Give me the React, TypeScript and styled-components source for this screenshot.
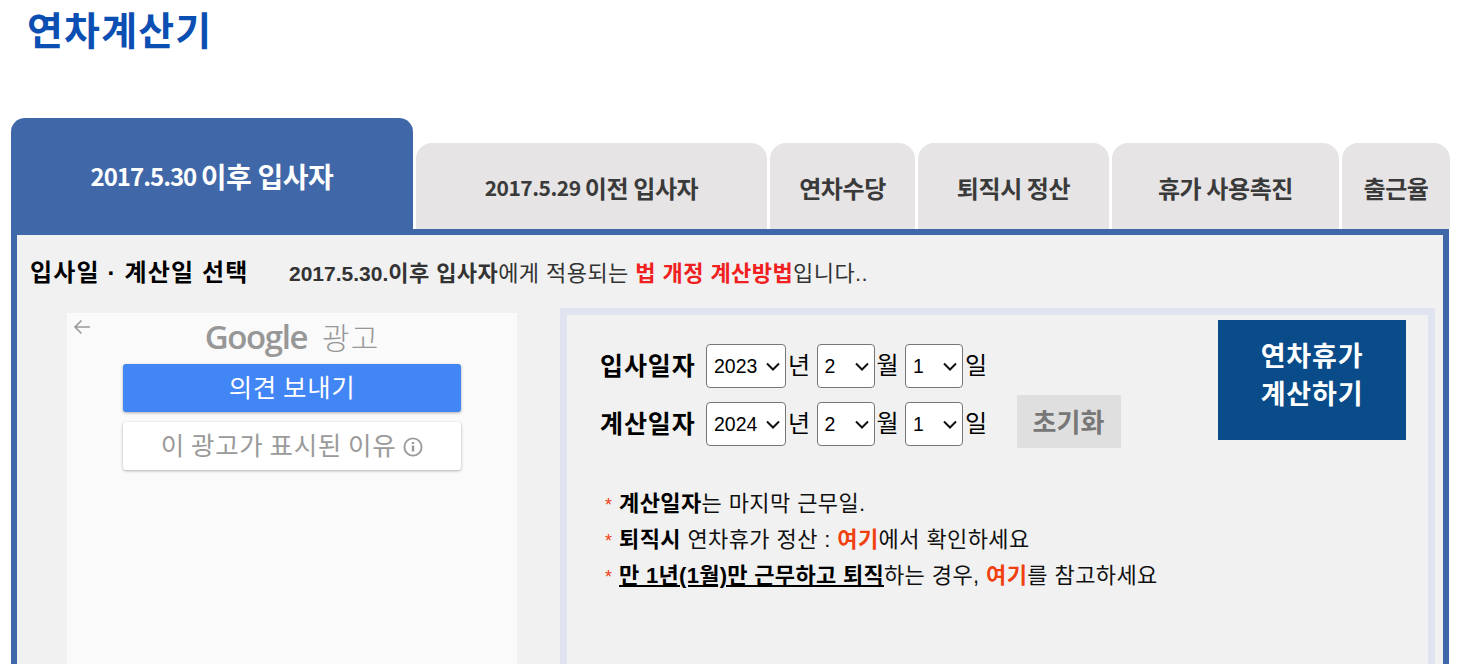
import styled, { createGlobalStyle } from "styled-components";

const GlobalStyle = createGlobalStyle`
  html, body {
    margin: 0;
    padding: 0;
    background: #fff;
    height: 664px;
    overflow: hidden;
  }
  body {
    font-family: "Liberation Sans", "Noto Sans CJK KR", sans-serif;
  }
`;

const Page = styled.div`
  width: 1464px;
  height: 664px;
  overflow: hidden;
  box-sizing: border-box;
  padding-left: 11px;
`;

const Title = styled.h1`
  margin: 0;
  height: 118px;
  padding-left: 16px;
  box-sizing: border-box;
  color: #0b4fb3;
  font-family: "Noto Sans CJK KR", sans-serif;
  font-size: 39px;
  font-weight: 700;
  line-height: 57px;
  letter-spacing: 1.2px;
`;

const TabBar = styled.div`
  display: flex;
  align-items: flex-end;
  gap: 3px;
  height: 111px;
`;

const Tab = styled.div<{ $w: number; $active?: boolean }>`
  width: ${(p) => p.$w}px;
  height: ${(p) => (p.$active ? 111 : 86)}px;
  padding-top: ${(p) => (p.$active ? 4 : 2)}px;
  box-sizing: border-box;
  display: flex;
  align-items: center;
  justify-content: center;
  border-radius: ${(p) => (p.$active ? "14px 14px 0 0" : "16px 16px 0 0")};
  background: ${(p) => (p.$active ? "#4068a8" : "#e6e4e5")};
  color: ${(p) => (p.$active ? "#fff" : "#3a3a3a")};
  font-family: "Noto Sans CJK KR", sans-serif;
  font-size: ${(p) => (p.$active ? 28 : 24)}px;
  font-weight: 700;
  letter-spacing: -0.4px;
  white-space: pre;
`;

const TabDate = styled.span<{ $active?: boolean }>`
  font-size: ${(p) => (p.$active ? 24 : 21)}px;
  letter-spacing: ${(p) => (p.$active ? -1 : -0.5)}px;
`;

const Panel = styled.div`
  width: 1438px;
  height: 435px;
  box-sizing: border-box;
  border: 6px solid #4068a8;
  border-bottom: 0;
  background: #f1f1f1;
`;

const Heading = styled.div`
  display: flex;
  align-items: center;
  height: 73px;
  padding-left: 13px;
  padding-bottom: 2px;
  box-sizing: border-box;
`;

const HeadingTitle = styled.strong`
  width: 259px;
  color: #000;
  font-size: 24px;
  font-weight: 700;
  letter-spacing: 1.15px;
  white-space: nowrap;
`;

const HeadingText = styled.p`
  margin: 0;
  color: #333;
  font-size: 22px;
  letter-spacing: 0.43px;
  white-space: nowrap;
`;

const HeadingDate = styled.b`
  font-size: 21px;
  letter-spacing: 0;
`;

const Red = styled.b`
  color: #f02020;
`;

const Columns = styled.div`
  display: flex;
  align-items: flex-start;
`;

const Ad = styled.div`
  position: relative;
  flex: none;
  width: 450px;
  height: 351px;
  margin: 5px 43px 0 50px;
  background: #fafafa;
  display: flex;
  flex-direction: column;
  align-items: center;
`;

const BackArrow = styled.svg`
  position: absolute;
  left: 6px;
  top: 6px;
`;

const AdLogo = styled.div`
  display: flex;
  align-items: center;
  gap: 15px;
  height: 51px;
  padding-bottom: 5px;
  box-sizing: border-box;
  color: #979797;
  white-space: nowrap;
`;

const GoogleWord = styled.span`
  font-family: "Open Sans", sans-serif;
  font-size: 33px;
  font-weight: 600;
  letter-spacing: -1.4px;
`;

const AdWord = styled.span`
  font-family: "Noto Sans CJK KR", sans-serif;
  font-size: 30px;
  font-weight: 300;
  letter-spacing: 1px;
`;

const AdButton = styled.div<{ $primary?: boolean }>`
  width: 338px;
  height: 48px;
  margin-bottom: 10px;
  padding-bottom: 5px;
  box-sizing: border-box;
  border-radius: 3px;
  display: flex;
  align-items: center;
  justify-content: center;
  gap: 7px;
  background: ${(p) => (p.$primary ? "#4285f4" : "#fff")};
  color: ${(p) => (p.$primary ? "#fff" : "#9a9a9a")};
  box-shadow: 0 1px 3px rgba(0, 0, 0, 0.3);
  font-family: "Noto Sans CJK KR", sans-serif;
  font-size: 25.5px;
  font-weight: 400;
  letter-spacing: 0.6px;
  white-space: nowrap;
  svg {
    margin-top: 7px;
  }
`;

const CalcBox = styled.section`
  flex: none;
  width: 875px;
  height: 356px;
  box-sizing: border-box;
  border: 7px solid #e0e4f0;
  border-bottom: 0;
  padding: 5px 22px 0 33px;
`;

const TopRow = styled.div`
  display: flex;
  justify-content: space-between;
  align-items: flex-start;
`;

const DateForm = styled.div`
  padding-top: 24px;
  display: flex;
  flex-direction: column;
  gap: 14px;
`;

const DateRow = styled.div`
  display: flex;
  align-items: center;
  height: 44px;
  color: #000;
`;

const RowLabel = styled.b`
  width: 106px;
  padding-bottom: 5px;
  font-size: 25px;
  font-weight: 700;
  letter-spacing: 0.9px;
  white-space: nowrap;
`;

const Unit = styled.span`
  width: 30.5px;
  padding-left: 2px;
  padding-bottom: 5px;
  box-sizing: border-box;
  font-size: 24px;
  font-weight: 400;
`;

const DateSelect = styled.select<{ $w: number }>`
  appearance: none;
  width: ${(p) => p.$w}px;
  height: 44px;
  box-sizing: border-box;
  margin: 0;
  padding: 0 0 0 7px;
  background: #fff url("data:image/svg+xml,%3Csvg xmlns='http://www.w3.org/2000/svg' width='14' height='9' viewBox='0 0 14 9' fill='none' stroke='%23111' stroke-width='2'%3E%3Cpath d='M1 1.5l6 6 6-6'/%3E%3C/svg%3E") no-repeat right 5px center;
  color: #000;
  border: 1px solid #767676;
  border-radius: 4px;
  font-family: "Liberation Sans", sans-serif;
  font-size: 19.5px;
`;

const ResetButton = styled.div`
  width: 104px;
  height: 53px;
  margin: -5px 0 0 23px;
  padding-bottom: 3px;
  box-sizing: border-box;
  display: flex;
  align-items: center;
  justify-content: center;
  background: #dfdfdf;
  color: #777;
  font-size: 26px;
  font-weight: 700;
`;

const CalcButton = styled.div`
  flex: none;
  width: 188px;
  height: 120px;
  padding-bottom: 12px;
  box-sizing: border-box;
  display: flex;
  align-items: center;
  justify-content: center;
  text-align: center;
  background: #0a4c8a;
  color: #fff;
  font-family: "Noto Sans CJK KR", sans-serif;
  font-size: 27px;
  font-weight: 700;
  letter-spacing: 0.8px;
  line-height: 38px;
`;

const Notes = styled.ul`
  list-style: none;
  margin: 40px 0 0;
  padding: 0 0 0 5px;
  color: #111;
  font-size: 22px;
  letter-spacing: 0.4px;
  white-space: nowrap;
`;

const NoteItem = styled.li`
  height: 36px;
  line-height: 36px;
  &::before {
    content: "*";
    display: inline-block;
    width: 14px;
    color: #f04010;
    font-size: 18px;
    letter-spacing: 0;
  }
`;

const Strong = styled.b`
  color: #000;
`;

const Under = styled.b`
  color: #000;
  text-decoration: underline;
  letter-spacing: 0.3px;
`;

const Link = styled.b`
  color: #f04010;
`;

const range = (from: number, to: number) =>
  Array.from({ length: to - from + 1 }, (_, i) => from + i);

type DateFieldsProps = {
  label: string,
  year: number,
  children?: React.ReactNode,
};

const DateFields = ({ label, year, children }: DateFieldsProps): JSX.Element => (
  <DateRow>
    <RowLabel>{label}</RowLabel>
    <DateSelect $w={80} defaultValue={year}>
      {range(2015, 2026).map((y) => <option key={y}>{y}</option>)}
    </DateSelect>
    <Unit>년</Unit>
    <DateSelect $w={58} defaultValue={2}>
      {range(1, 12).map((m) => <option key={m}>{m}</option>)}
    </DateSelect>
    <Unit>월</Unit>
    <DateSelect $w={58} defaultValue={1}>
      {range(1, 31).map((d) => <option key={d}>{d}</option>)}
    </DateSelect>
    <Unit>일</Unit>
    {children}
  </DateRow>
);

const App = (): JSX.Element => {
  return (
    <Page>
      <GlobalStyle />
      <Title>연차계산기</Title>
      <TabBar>
        <Tab $w={402} $active><TabDate $active>2017.5.30 </TabDate>이후 입사자</Tab>
        <Tab $w={351}><TabDate>2017.5.29 </TabDate>이전 입사자</Tab>
        <Tab $w={145}>연차수당</Tab>
        <Tab $w={191}>퇴직시 정산</Tab>
        <Tab $w={227}>휴가 사용촉진</Tab>
        <Tab $w={108}>출근율</Tab>
      </TabBar>
      <Panel>
        <Heading>
          <HeadingTitle>입사일 · 계산일 선택</HeadingTitle>
          <HeadingText>
            <HeadingDate>2017.5.30.</HeadingDate><b>이후 입사자</b>에게 적용되는 <Red>법 개정 계산방법</Red>입니다..
          </HeadingText>
        </Heading>
        <Columns>
          <Ad>
            <BackArrow width="18" height="16" viewBox="0 0 18 16" fill="none" stroke="#9a9a9a" strokeWidth="1.6">
              <path d="M17 8H2M8.5 1.5 2 8l6.5 6.5" />
            </BackArrow>
            <AdLogo>
              <GoogleWord>Google</GoogleWord>
              <AdWord>광고</AdWord>
            </AdLogo>
            <AdButton $primary>의견 보내기</AdButton>
            <AdButton>
              이 광고가 표시된 이유
              <svg width="20" height="20" viewBox="0 0 20 20" fill="none" stroke="#9a9a9a" strokeWidth="1.9">
                <circle cx="10" cy="10" r="8.6" />
                <path d="M10 8.5v6M10 5v2" strokeWidth="2.4" />
              </svg>
            </AdButton>
          </Ad>
          <CalcBox>
            <TopRow>
              <DateForm>
                <DateFields label="입사일자" year={2023} />
                <DateFields label="계산일자" year={2024}>
                  <ResetButton>초기화</ResetButton>
                </DateFields>
              </DateForm>
              <CalcButton>연차휴가<br />계산하기</CalcButton>
            </TopRow>
            <Notes>
              <NoteItem><Strong>계산일자</Strong>는 마지막 근무일.</NoteItem>
              <NoteItem><Strong>퇴직시</Strong> 연차휴가 정산 : <Link>여기</Link>에서 확인하세요</NoteItem>
              <NoteItem><Under>만 1년(1월)만 근무하고 퇴직</Under>하는 경우, <Link>여기</Link>를 참고하세요</NoteItem>
            </Notes>
          </CalcBox>
        </Columns>
      </Panel>
    </Page>
  );
};

export default App;
